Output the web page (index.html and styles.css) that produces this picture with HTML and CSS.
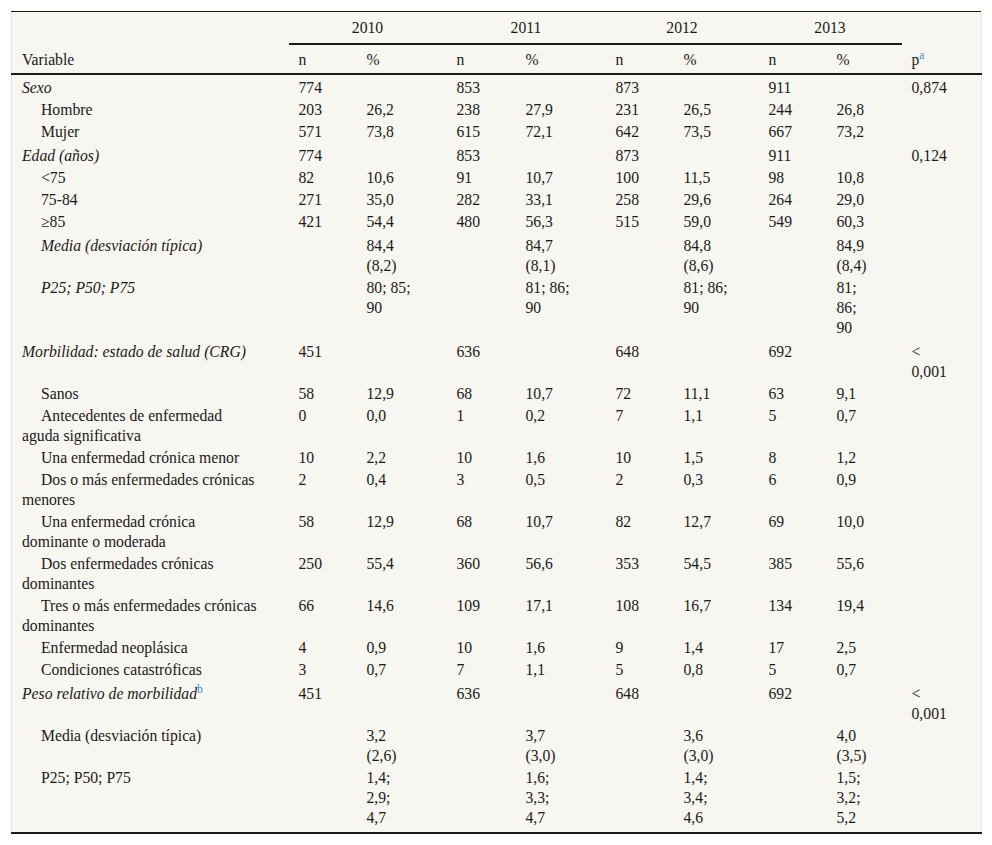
FILE: index.html
```html
<!DOCTYPE html>
<html lang="es">
<head>
<meta charset="utf-8">
<title>Tabla</title>
<link rel="stylesheet" href="styles.css">
</head>
<body>
<table class="tbl">
  <colgroup>
    <col class="c-var"><col class="c-n"><col class="c-p1"><col class="c-n2"><col class="c-p1"><col class="c-n"><col class="c-p3"><col class="c-n"><col class="c-p4"><col class="c-pv">
  </colgroup>
  <thead>
    <tr class="h1">
      <th></th>
      <th colspan="2" class="yr">2010</th>
      <th colspan="2" class="yr">2011</th>
      <th colspan="2" class="yr">2012</th>
      <th colspan="2" class="yr">2013</th>
      <th></th>
    </tr>
    <tr class="h2">
      <th>Variable</th>
      <th>n</th><th>%</th>
      <th>n</th><th>%</th>
      <th>n</th><th>%</th>
      <th>n</th><th>%</th>
      <th>p<sup class="ref">a</sup></th>
    </tr>
  </thead>
  <tbody>
    <tr class="first"><td class="it">Sexo</td><td>774</td><td></td><td>853</td><td></td><td>873</td><td></td><td>911</td><td></td><td>0,874</td></tr>
    <tr><td class="ind">Hombre</td><td>203</td><td>26,2</td><td>238</td><td>27,9</td><td>231</td><td>26,5</td><td>244</td><td>26,8</td><td></td></tr>
    <tr><td class="ind">Mujer</td><td>571</td><td>73,8</td><td>615</td><td>72,1</td><td>642</td><td>73,5</td><td>667</td><td>73,2</td><td></td></tr>
    <tr class="grp"><td class="it">Edad (años)</td><td>774</td><td></td><td>853</td><td></td><td>873</td><td></td><td>911</td><td></td><td>0,124</td></tr>
    <tr><td class="ind">&lt;75</td><td>82</td><td>10,6</td><td>91</td><td>10,7</td><td>100</td><td>11,5</td><td>98</td><td>10,8</td><td></td></tr>
    <tr><td class="ind">75-84</td><td>271</td><td>35,0</td><td>282</td><td>33,1</td><td>258</td><td>29,6</td><td>264</td><td>29,0</td><td></td></tr>
    <tr><td class="ind">≥85</td><td>421</td><td>54,4</td><td>480</td><td>56,3</td><td>515</td><td>59,0</td><td>549</td><td>60,3</td><td></td></tr>
    <tr class="grp"><td class="ind it">Media (desviación típica)</td><td></td><td>84,4<br>(8,2)</td><td></td><td>84,7<br>(8,1)</td><td></td><td>84,8<br>(8,6)</td><td></td><td>84,9<br>(8,4)</td><td></td></tr>
    <tr><td class="ind it">P25; P50; P75</td><td></td><td>80; 85;<br>90</td><td></td><td>81; 86;<br>90</td><td></td><td>81; 86;<br>90</td><td></td><td>81;<br>86;<br>90</td><td></td></tr>
    <tr class="grp"><td class="it">Morbilidad: estado de salud (CRG)</td><td>451</td><td></td><td>636</td><td></td><td>648</td><td></td><td>692</td><td></td><td>&lt;<br>0,001</td></tr>
    <tr><td class="ind">Sanos</td><td>58</td><td>12,9</td><td>68</td><td>10,7</td><td>72</td><td>11,1</td><td>63</td><td>9,1</td><td></td></tr>
    <tr><td class="ind">Antecedentes de enfermedad<br>aguda significativa</td><td>0</td><td>0,0</td><td>1</td><td>0,2</td><td>7</td><td>1,1</td><td>5</td><td>0,7</td><td></td></tr>
    <tr><td class="ind">Una enfermedad crónica menor</td><td>10</td><td>2,2</td><td>10</td><td>1,6</td><td>10</td><td>1,5</td><td>8</td><td>1,2</td><td></td></tr>
    <tr><td class="ind">Dos o más enfermedades crónicas<br>menores</td><td>2</td><td>0,4</td><td>3</td><td>0,5</td><td>2</td><td>0,3</td><td>6</td><td>0,9</td><td></td></tr>
    <tr><td class="ind">Una enfermedad crónica<br>dominante o moderada</td><td>58</td><td>12,9</td><td>68</td><td>10,7</td><td>82</td><td>12,7</td><td>69</td><td>10,0</td><td></td></tr>
    <tr><td class="ind">Dos enfermedades crónicas<br>dominantes</td><td>250</td><td>55,4</td><td>360</td><td>56,6</td><td>353</td><td>54,5</td><td>385</td><td>55,6</td><td></td></tr>
    <tr><td class="ind">Tres o más enfermedades crónicas<br>dominantes</td><td>66</td><td>14,6</td><td>109</td><td>17,1</td><td>108</td><td>16,7</td><td>134</td><td>19,4</td><td></td></tr>
    <tr><td class="ind">Enfermedad neoplásica</td><td>4</td><td>0,9</td><td>10</td><td>1,6</td><td>9</td><td>1,4</td><td>17</td><td>2,5</td><td></td></tr>
    <tr><td class="ind">Condiciones catastróficas</td><td>3</td><td>0,7</td><td>7</td><td>1,1</td><td>5</td><td>0,8</td><td>5</td><td>0,7</td><td></td></tr>
    <tr class="grp"><td class="it">Peso relativo de morbilidad<sup class="ref">b</sup></td><td>451</td><td></td><td>636</td><td></td><td>648</td><td></td><td>692</td><td></td><td>&lt;<br>0,001</td></tr>
    <tr><td class="ind">Media (desviación típica)</td><td></td><td>3,2<br>(2,6)</td><td></td><td>3,7<br>(3,0)</td><td></td><td>3,6<br>(3,0)</td><td></td><td>4,0<br>(3,5)</td><td></td></tr>
    <tr class="last"><td class="ind">P25; P50; P75</td><td></td><td>1,4;<br>2,9;<br>4,7</td><td></td><td>1,6;<br>3,3;<br>4,7</td><td></td><td>1,4;<br>3,4;<br>4,6</td><td></td><td>1,5;<br>3,2;<br>5,2</td><td></td></tr>
  </tbody>
</table>
</body>
</html>
```

FILE: styles.css
```css
html, body {
  margin: 0;
  padding: 0;
  background: #ffffff;
}
body {
  padding: 11px 11px 0 11px;
  font-family: "Liberation Serif", "DejaVu Serif", serif;
  font-size: 15.7px;
  color: #1a1a1a;
}
.tbl {
  width: 970px;
  table-layout: fixed;
  border-collapse: collapse;
  background: #f8f6f0;
  border-top: 1px solid #1a1a1a;
  border-bottom: 2px solid #1a1a1a;
  border-left: 1px solid #ebe8e0;
  border-right: 1px solid #ebe8e0;
}
.c-var { width: 277px; }
.c-n { width: 68px; }
.c-n2 { width: 69px; }
.c-p1 { width: 90px; }
.c-p3 { width: 85px; }
.c-p4 { width: 75px; }
.c-pv { width: 80px; }

.tbl th {
  font-weight: normal;
  text-align: left;
  vertical-align: bottom;
  line-height: 20px;
  white-space: nowrap;
}
.tbl .h1 th {
  padding: 6px 10px 5px 10px;
}
.tbl .h1 th.yr {
  text-align: center;
  border-bottom: 2px solid #1a1a1a;
}
.tbl .h2 th {
  border-bottom: 2px solid #1a1a1a;
  padding: 5px 10px 3px 10px;
}
.tbl td {
  vertical-align: top;
  text-align: left;
  padding: 1px 10px 1px 10px;
  line-height: 20px;
  white-space: nowrap;
}
.tbl tr.first td { padding-top: 3px; }
.tbl tr.grp td { padding-top: 3px; }
.tbl tr.last td { padding-bottom: 4px; }
.it { font-style: italic; }
.ind { text-indent: 19px; }
.ref {
  color: #2f8fd8;
  font-size: 11.5px;
  line-height: 0;
  vertical-align: 6px;
  font-style: normal;
}
```
